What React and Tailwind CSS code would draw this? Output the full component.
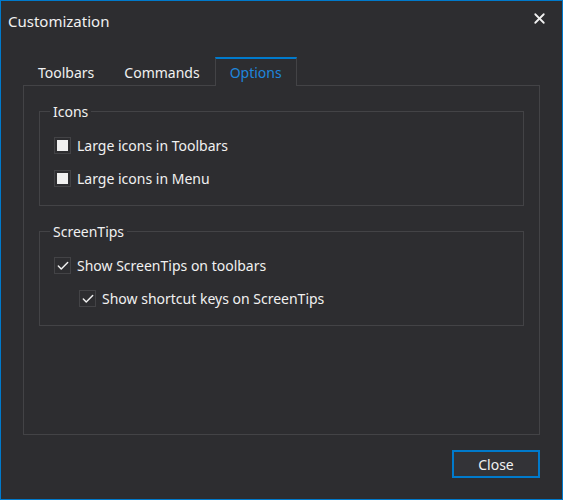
import { X, Check } from "lucide-react";

const font = { fontFamily: '"Noto Sans", "Open Sans", sans-serif' };

function CheckRow({ label, checked, indent }) {
  return (
    <div className={`flex items-center h-[33px] ${indent ? "pl-[25px]" : ""}`}>
      <div className="w-[17px] h-[17px] border border-[#434346] bg-[#2d2d30] flex items-center justify-center shrink-0">
        {checked ? (
          <Check size={14} strokeWidth={2.5} className="text-[#f1f1f1]" />
        ) : (
          <div className="w-[11px] h-[11px] bg-[#f0f0f0]" />
        )}
      </div>
      <span className="ml-[6px] text-[14px] text-[#f1f1f1]">{label}</span>
    </div>
  );
}

function GroupBox({ title, children, className = "" }) {
  return (
    <div className={`relative border border-[#434346] pt-[17px] pb-[10px] pl-[14px] ${className}`}>
      <span className="absolute -top-[11px] left-[10px] px-[3px] bg-[#2d2d30] text-[14px] text-[#f1f1f1]">
        {title}
      </span>
      {children}
    </div>
  );
}

export default function App() {
  const tabs = ["Toolbars", "Commands", "Options"];
  const active = "Options";

  return (
    <div
      className="w-[563px] h-[500px] bg-[#2d2d30] border border-[#007acc] flex flex-col text-[#f1f1f1]"
      style={font}
    >
      {/* Barra de titulo */}
      <div className="flex items-center justify-between h-[40px] pl-[7px] pr-[14px]">
        <span className="text-[15px]">Customization</span>
        <X size={17} strokeWidth={2.5} className="text-[#f1f1f1] -mt-[6px]" />
      </div>

      <div className="flex-1 flex flex-col px-[22px]">
        {/* Pestanas */}
        <div className="flex mt-[16px] h-[29px] -mb-px relative z-10">
          {tabs.map((tab) =>
            tab === active ? (
              <div
                key={tab}
                className="px-[14px] flex items-center border-t-2 border-x border-t-[#007acc] border-x-[#434346] bg-[#2d2d30] text-[#1f86dc] text-[14px]"
              >
                {tab}
              </div>
            ) : (
              <div key={tab} className="px-[15px] flex items-center pt-[2px] text-[14px]">
                {tab}
              </div>
            )
          )}
        </div>

        {/* Panel de opciones */}
        <div className="h-[350px] border border-[#434346] pt-[25px] px-[15px]">
          <GroupBox title="Icons">
            <CheckRow label="Large icons in Toolbars" />
            <CheckRow label="Large icons in Menu" />
          </GroupBox>
          <GroupBox title="ScreenTips" className="mt-[25px]">
            <CheckRow label="Show ScreenTips on toolbars" checked />
            <CheckRow label="Show shortcut keys on ScreenTips" checked indent />
          </GroupBox>
        </div>

        <div className="flex justify-end mt-[15px]">
          <button className="w-[88px] h-[28px] border-2 border-[#007acc] bg-[#333337] text-[14px] text-[#f1f1f1]">
            Close
          </button>
        </div>
      </div>
    </div>
  );
}
